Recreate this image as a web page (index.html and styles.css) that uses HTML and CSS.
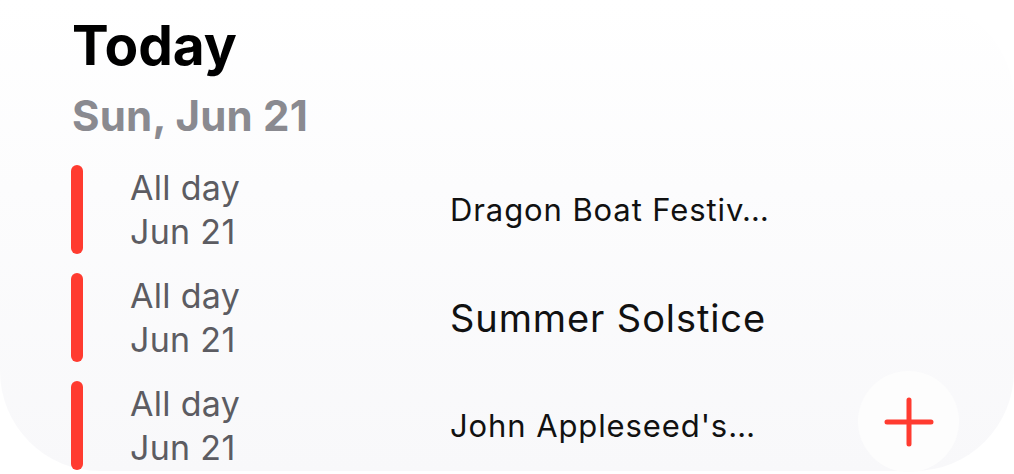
FILE: index.html
```html
<!DOCTYPE html>
<html lang="en">
<head>
<meta charset="utf-8">
<title>Today</title>
<link rel="stylesheet" href="styles.css">
</head>
<body>
  <main class="screen">
    <header class="head">
      <h1 class="title">Today</h1>
      <h2 class="date">Sun, Jun 21</h2>
    </header>
    <ul class="events">
      <li class="event">
        <span class="bar"></span>
        <div class="when"><span>All day</span><span>Jun 21</span></div>
        <div class="what small">Dragon Boat Festiv…</div>
      </li>
      <li class="event">
        <span class="bar"></span>
        <div class="when"><span>All day</span><span>Jun 21</span></div>
        <div class="what">Summer Solstice</div>
      </li>
      <li class="event">
        <span class="bar"></span>
        <div class="when"><span>All day</span><span>Jun 21</span></div>
        <div class="what small">John Appleseed's…</div>
      </li>
    </ul>
    <button class="add" aria-label="New event">
      <svg viewBox="0 0 50 50" width="50" height="50"><path d="M25 3v44M3 25h44" stroke="#ff3b30" stroke-width="5" stroke-linecap="round" fill="none"/></svg>
    </button>
  </main>
</body>
</html>
```
FILE: styles.css
```css
html, body {
  margin: 0;
  height: 100%;
  background: #ffffff;
  overflow: hidden;
}

body {
  font-family: Inter, "Noto Sans", sans-serif;
}

.screen {
  position: relative;
  box-sizing: border-box;
  height: calc(100% - 3px);
  border-radius: 0 100px 100px 100px;
  background: linear-gradient(180deg, #ffffff 0%, #fcfcfd 40%, #f8f8fa 100%);
  padding: 18px 0 0 71px;
  display: flex;
  flex-direction: column;
}

.head {
  display: flex;
  flex-direction: column;
  padding-left: 3px;
}

.title {
  margin: 0 0 0 -2px;
  font-size: 55px;
  line-height: 55px;
  font-weight: 700;
  color: #000;
  letter-spacing: 0;
}

.date {
  margin: 22px 0 0 -2px;
  font-size: 42px;
  line-height: 41px;
  font-weight: 700;
  color: #8a8a90;
  letter-spacing: 0.2px;
}

.events {
  list-style: none;
  margin: 29px 0 0;
  padding: 0;
  display: flex;
  flex-direction: column;
  gap: 19px;
}

.event {
  display: flex;
  align-items: center;
  height: 89px;
}

.bar {
  flex: none;
  width: 12px;
  height: 89px;
  border-radius: 6px;
  background: #ff3b30;
}

.when {
  flex: none;
  width: 320px;
  margin-left: 47px;
  display: flex;
  flex-direction: column;
  font-size: 34px;
  line-height: 44px;
  letter-spacing: 0.3px;
  color: #5c5c62;
}

.what {
  font-size: 38px;
  letter-spacing: 0.9px;
  color: #111;
  white-space: nowrap;
}

.what.small {
  font-size: 31px;
}

.add {
  position: absolute;
  left: 858px;
  top: 371px;
  width: 101px;
  height: 101px;
  border: none;
  border-radius: 50%;
  background: #fdfdfd;
  display: flex;
  align-items: center;
  justify-content: center;
  padding: 0;
}
```
